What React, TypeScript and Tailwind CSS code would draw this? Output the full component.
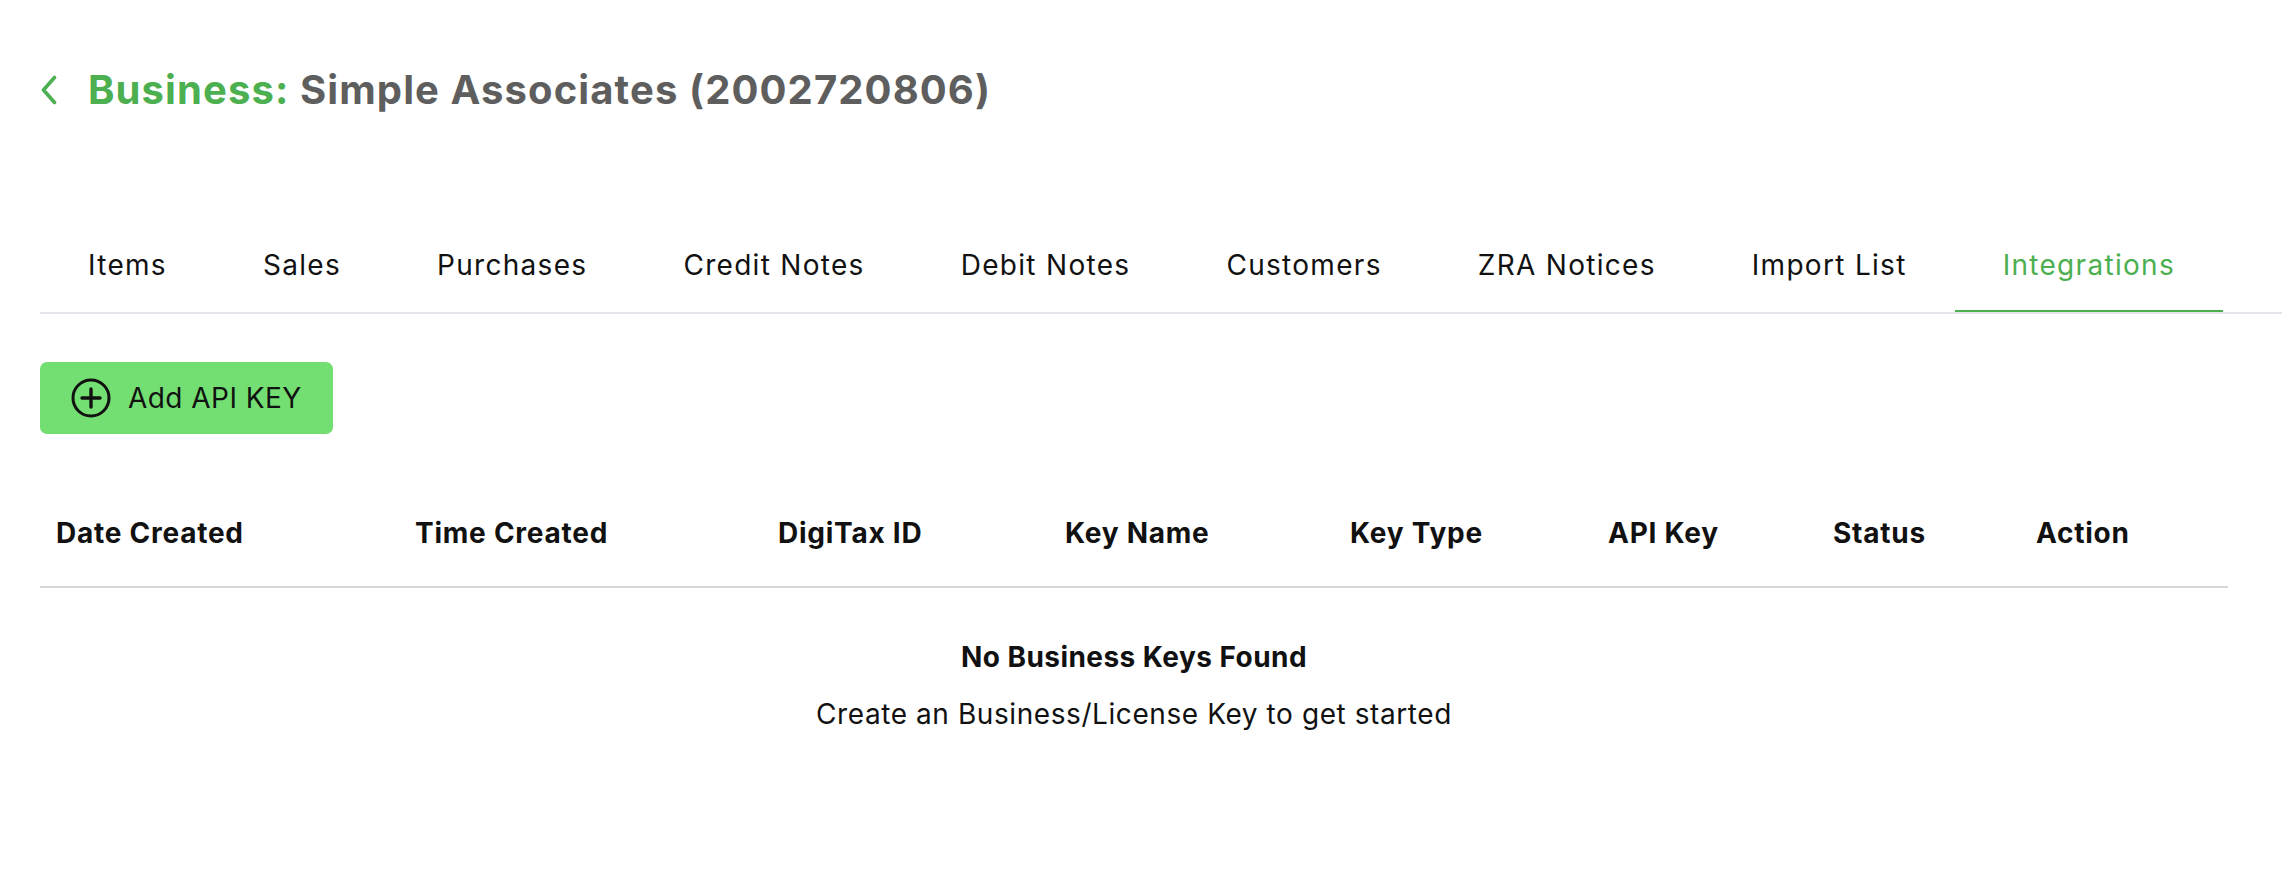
import React from "react";

const tabs = [
  "Items",
  "Sales",
  "Purchases",
  "Credit Notes",
  "Debit Notes",
  "Customers",
  "ZRA Notices",
  "Import List",
  "Integrations",
];

const cols = [
  "Date Created",
  "Time Created",
  "DigiTax ID",
  "Key Name",
  "Key Type",
  "API Key",
  "Status",
  "Action",
];

export default function App() {
  return (
    <div
      className="min-h-screen w-full bg-white text-[#111111]"
      style={{ fontFamily: "Inter, 'Noto Sans', sans-serif" }}
    >
      <div className="pl-[40px]">
        {/* Title */}
        <div className="flex items-center pt-[66px]">
          <svg
            width="18"
            height="30"
            viewBox="0 0 18 30"
            fill="none"
            className="shrink-0"
          >
            <path
              d="M14.5 2.5 L3.5 15 L14.5 27.5"
              stroke="#4caf50"
              strokeWidth="3.6"
              strokeLinecap="round"
              strokeLinejoin="round"
            />
          </svg>
          <h1 className="ml-[30px] text-[40px] leading-[48px] font-bold tracking-[1.1px]">
            <span className="text-[#4caf50]">Business:</span>{" "}
            <span className="text-[#5e5e5e]">Simple Associates (2002720806)</span>
          </h1>
        </div>

        {/* Tabs */}
        <div className="mt-[131px] flex border-b-2 border-[#e4e4ea]">
          {tabs.map((t) => {
            const active = t === "Integrations";
            return (
              <div
                key={t}
                className={
                  active
                    ? "px-[48px] pb-[25px] text-[28px] leading-[40px] tracking-[1.3px] border-b-2 border-[#4caf50] text-[#4caf50]"
                    : "px-[48px] pb-[25px] text-[28px] leading-[40px] tracking-[1.3px] border-b-2 border-transparent text-[#111111]"
                }
              >
                {t}
              </div>
            );
          })}
        </div>

        {/* Button */}
        <div className="mt-[48px] flex">
          <button className="flex h-[72px] w-[293px] items-center rounded-[7px] bg-[#73df73] pl-[31px] text-[28px] leading-[40px] tracking-[0.45px] text-[#111111]">
            <svg width="40" height="40" viewBox="0 0 40 40" fill="none">
              <circle cx="20" cy="20" r="18" stroke="#111" strokeWidth="3" />
              <path
                d="M20 11 V29 M11 20 H29"
                stroke="#111"
                strokeWidth="3.4"
                strokeLinecap="round"
              />
            </svg>
            <span className="ml-[17px]">Add API KEY</span>
          </button>
        </div>

        {/* Table */}
        <div className="mt-[48px] w-[2188px]">
          <div className="grid grid-cols-[359px_363px_287px_285px_258px_225px_203px_208px] border-b-2 border-[#d6d6d6] pt-[31px] pb-[33px]">
            {cols.map((c) => (
              <div
                key={c}
                className="pl-[16px] text-[28px] leading-[40px] font-bold tracking-[0.75px]"
              >
                {c}
              </div>
            ))}
          </div>
          <div className="flex flex-col items-center pt-[49px]">
            <div className="text-[28px] leading-[40px] font-bold tracking-[0.45px]">
              No Business Keys Found
            </div>
            <div className="mt-[17px] text-[28px] leading-[40px] tracking-[0.58px]">
              Create an Business/License Key to get started
            </div>
          </div>
        </div>
      </div>
    </div>
  );
}
